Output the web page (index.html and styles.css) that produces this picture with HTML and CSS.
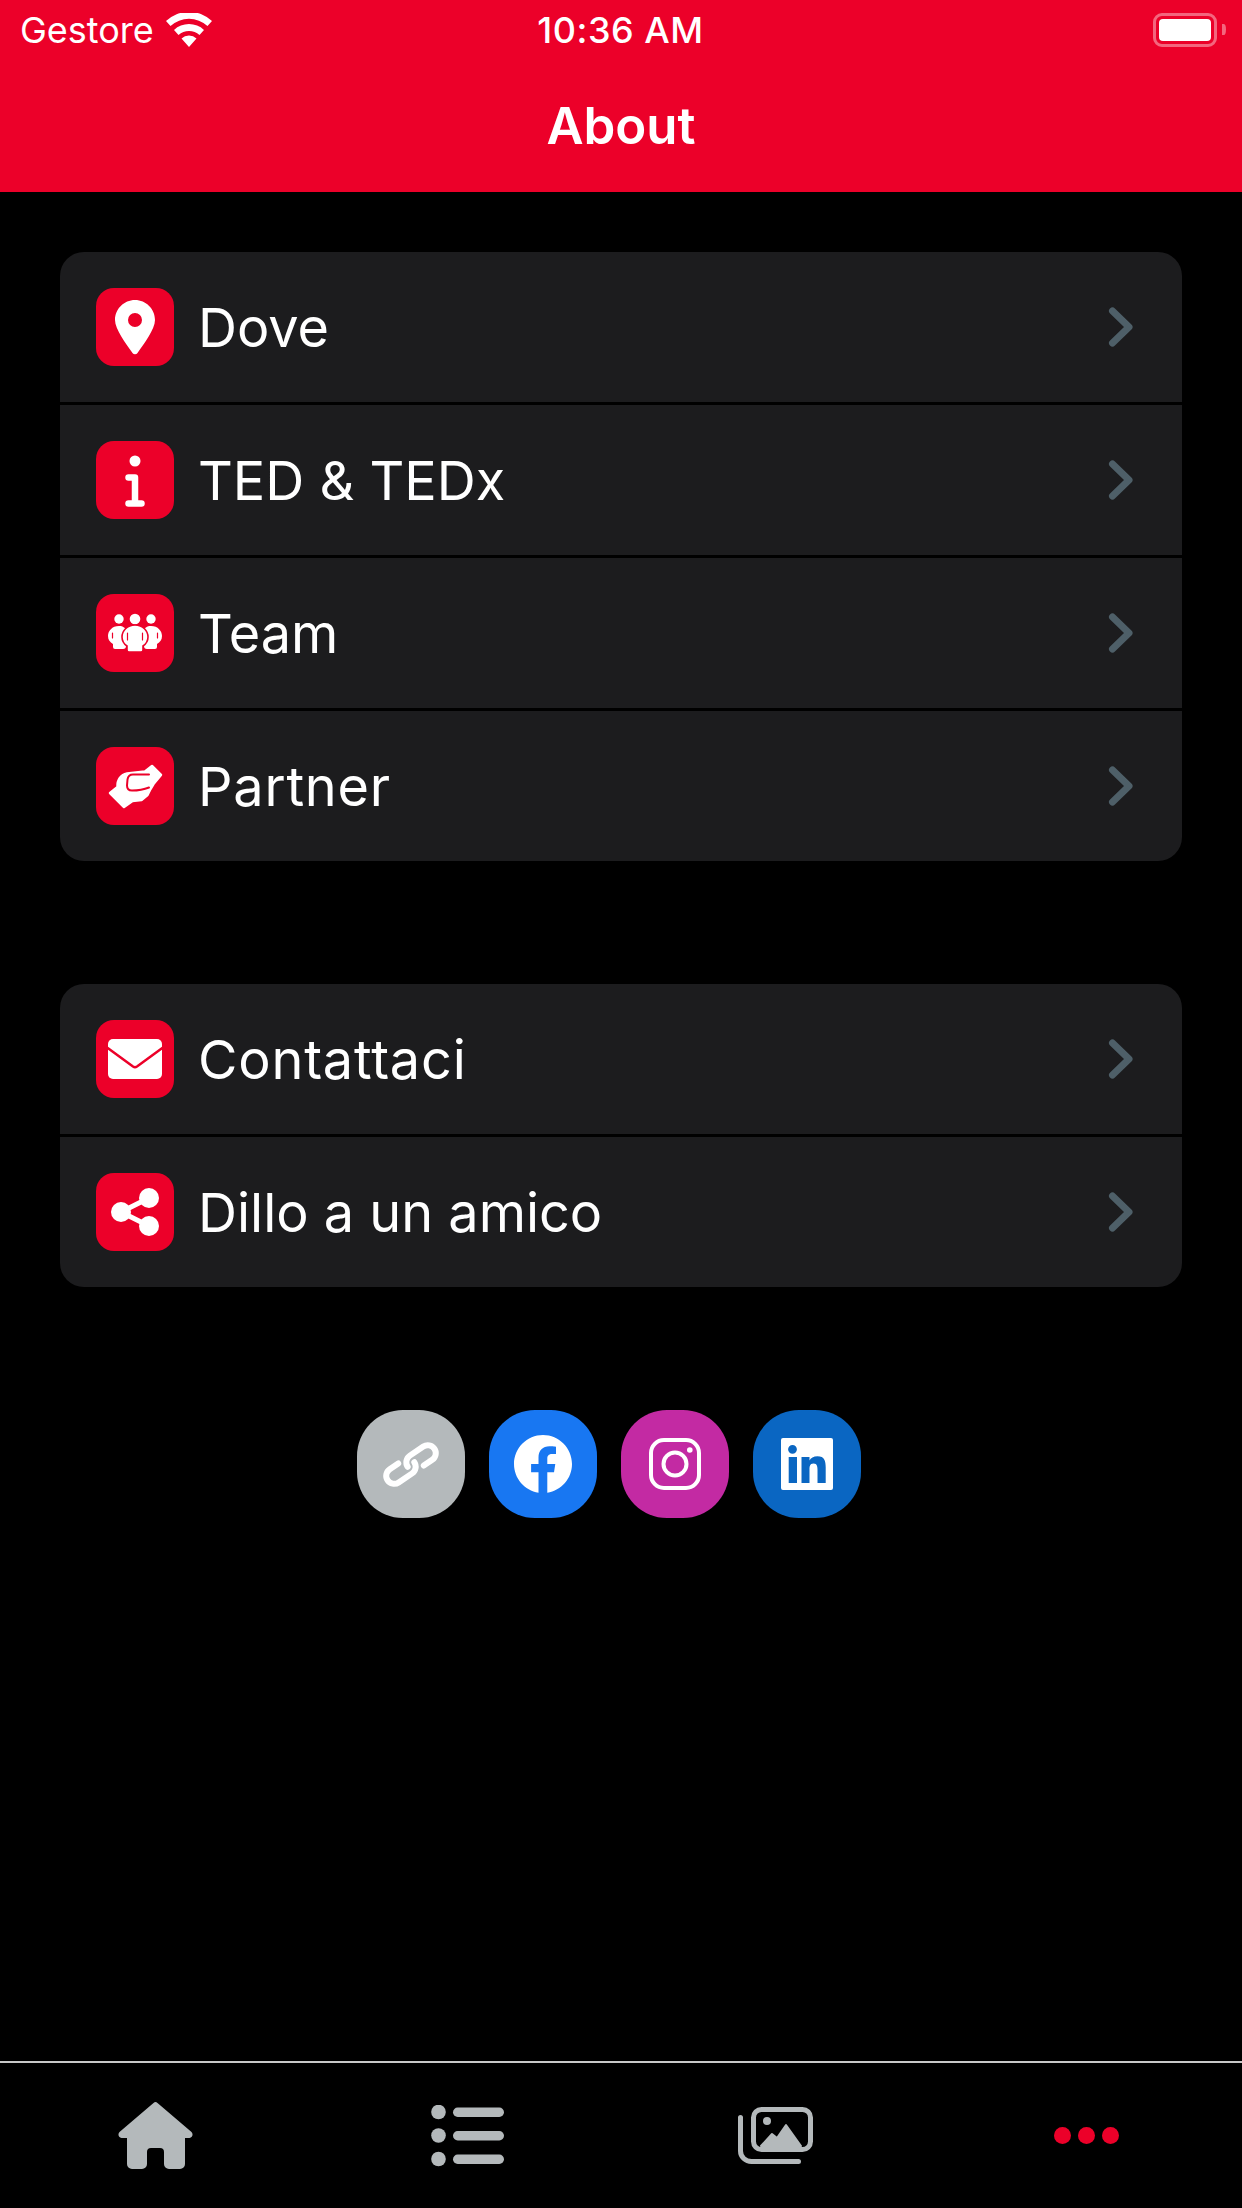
FILE: index.html
```html
<!DOCTYPE html>
<html lang="en">
<head>
    <meta charset="UTF-8">
    <meta name="viewport" content="width=device-width, initial-scale=1.0">
    <title>About</title>
    <link rel="stylesheet" href="styles.css">
</head>
<body>
    <header class="top-bar">
        <div class="status-bar">
            <div class="status-left">
                <span>Gestore</span>
                <svg class="wifi" viewBox="0 0 46 34"><path d="M23 34l-7.500-8.500a11 11 0 0 1 15 0zM12.500 22l-4.500-5a22 22 0 0 1 30 0l-4.500 5a15.500 15.500 0 0 0-21 0zM4.500 13L0 8a33.500 33.500 0 0 1 46 0l-4.500 5a27.500 27.500 0 0 0-37 0z" fill="#fff"/></svg>
            </div>
            <span class="status-time">10:36 AM</span>
            <div class="battery"><div class="battery-level"></div></div>
        </div>
        <h1>About</h1>
    </header>

    <main class="content">
        <section class="card">
            <div class="row">
                <span class="row-icon"><svg viewBox="0 0 78 78"><path fill-rule="evenodd" d="M39 12c11 0 20 9 20 20 0 9-11 24-17.500 33a3 3 0 0 1-5 0C30 56 19 41 19 32c0-11 9-20 20-20zm0 13a7 7 0 1 0 0 14 7 7 0 0 0 0-14z" fill="#fff"/></svg></span>
                <span class="row-label">Dove</span>
                <svg class="chevron" viewBox="0 0 26 42"><path d="M4.500 5L21 21 4.500 37" /></svg>
            </div>
            <div class="row">
                <span class="row-icon"><svg viewBox="0 0 78 78"><circle cx="39" cy="20" r="5.500" fill="#fff"/><path d="M32.500 36.500H39v26M32.500 62.500h13" stroke="#fff" stroke-width="6.500" stroke-linecap="round" stroke-linejoin="round" fill="none"/></svg></span>
                <span class="row-label">TED &amp; TEDx</span>
                <svg class="chevron" viewBox="0 0 26 42"><path d="M4.500 5L21 21 4.500 37" /></svg>
            </div>
            <div class="row">
                <span class="row-icon"><svg viewBox="0 0 78 78" fill="#fff"><circle cx="23" cy="25" r="4.700"/><circle cx="39" cy="25" r="5.300"/><circle cx="55" cy="25" r="4.700"/><path d="M23 32c-7 0-11 5-11 10 0 4 2 6 5 8v3a2 2 0 0 0 2 2h8c2 0 3-1 3-3V37c0-3-3-5-7-5zM55 32c7 0 11 5 11 10 0 4-2 6-5 8v3a2 2 0 0 1-2 2h-8c-2 0-3-1-3-3V37c0-3 3-5 7-5z"/><path d="M39 31c-8 0-13 6-13 12 0 4 2 7 5 9v4a2 2 0 0 0 2 2h12a2 2 0 0 0 2-2v-4c3-2 5-5 5-9 0-6-5-12-13-12z" stroke="#ec0029" stroke-width="1.600"/><path d="M31.500 39v7M46.500 39v7M16.500 39v5M61.500 39v5" stroke="#ec0029" stroke-width="1.200" stroke-linecap="round" fill="none"/></svg></span>
                <span class="row-label">Team</span>
                <svg class="chevron" viewBox="0 0 26 42"><path d="M4.500 5L21 21 4.500 37" /></svg>
            </div>
            <div class="row">
                <span class="row-icon"><svg viewBox="0 0 78 78"><path d="M14 46l7.500-6C21 33 25 27.500 31 26.500L49 24.500 56 19l9 9-7.500 9-3 5-3 6-6 5-9 1-8.500 6z" fill="#fff" stroke="#fff" stroke-width="2.500" stroke-linejoin="round"/><path d="M53 27.500H37c-3 0-5 2-5.500 5l-.5 6c0 3 2 5 5 5 6 0 12-1 17-3" fill="none" stroke="#ec0029" stroke-width="2" stroke-linecap="round"/></svg></span>
                <span class="row-label row-label-wide">Partner</span>
                <svg class="chevron" viewBox="0 0 26 42"><path d="M4.500 5L21 21 4.500 37" /></svg>
            </div>
        </section>

        <section class="card">
            <div class="row">
                <span class="row-icon"><svg viewBox="0 0 78 78"><rect x="12" y="19" width="54" height="40" rx="5" fill="#fff"/><path d="M11 27.500L37 46.500a3.500 3.500 0 0 0 4 0L67 27.500" fill="none" stroke="#ec0029" stroke-width="2.500"/></svg></span>
                <span class="row-label row-label-wide">Contattaci</span>
                <svg class="chevron" viewBox="0 0 26 42"><path d="M4.500 5L21 21 4.500 37" /></svg>
            </div>
            <div class="row">
                <span class="row-icon"><svg viewBox="0 0 78 78" fill="#fff"><circle cx="53" cy="25" r="10"/><circle cx="53" cy="53" r="10"/><circle cx="25" cy="39" r="10"/><path d="M25 39l28-14M25 39l28 14" stroke="#fff" stroke-width="5"/></svg></span>
                <span class="row-label">Dillo a un amico</span>
                <svg class="chevron" viewBox="0 0 26 42"><path d="M4.500 5L21 21 4.500 37" /></svg>
            </div>
        </section>

        <div class="social">
            <span class="social-btn social-link"><svg viewBox="0 0 108 108"><g transform="rotate(-34 54 54.500)" fill="none" stroke="#fff" stroke-width="6" stroke-linecap="round"><path d="M58 54.500a8 8 0 0 1-8 8H33.750a8 8 0 0 1 0-16H44"/><path d="M50 54.500a8 8 0 0 1 8-8H74.250a8 8 0 0 1 0 16H64"/></g></svg></span>
            <span class="social-btn social-fb"><svg viewBox="0 0 108 108"><path d="M83 54c0-16-13-29-29-29S25 38 25 54c0 14.500 10.600 26.500 24.500 28.700V62.300h-7.400V54h7.400v-6.400c0-7.300 4.300-11.300 11-11.300 3.200 0 6.500.600 6.500.600v7.100H63c-3.600 0-4.700 2.200-4.700 4.500V54h8l-1.300 8.300h-6.700v20.400C72.400 80.500 83 68.500 83 54z" fill="#fff"/></svg></span>
            <span class="social-btn social-ig"><svg viewBox="0 0 108 108"><g fill="none" stroke="#fff" stroke-width="4"><rect x="30" y="30" width="48" height="48" rx="13"/><circle cx="54" cy="54" r="11.500"/></g><circle cx="68.800" cy="40" r="2.800" fill="#fff"/></svg></span>
            <span class="social-btn social-in"><svg viewBox="0 0 108 108"><path fill-rule="evenodd" fill="#fff" d="M30 28h48a2 2 0 0 1 2 2v48a2 2 0 0 1-2 2H30a2 2 0 0 1-2-2V30a2 2 0 0 1 2-2zm9.500 15.700a4.400 4.400 0 1 0 0-8.800 4.400 4.400 0 0 0 0 8.800zM35.700 47v26H44V47zm12.800 0v26h8V60c0-3.400.1-6.500 4-6.500s4 3.500 4 6.500v13h8.200V57.200c0-6.200-1.200-11-8.200-11-4 0-6.800 1.900-8 4.300V47z"/></svg></span>
        </div>
    </main>

    <nav class="tab-bar">
        <span class="tab"><svg class="tab-home" viewBox="0 0 75 67" fill="#b4b9bb"><path d="M35.500 1a3 3 0 0 1 4 0L73.500 30c2 2 1 6-2 6H67V62a5 5 0 0 1-5 5H51a5 5 0 0 1-5-5V50a4 4 0 0 0-4-4H33a4 4 0 0 0-4 4V62a5 5 0 0 1-5 5H14a5 5 0 0 1-5-5V36H3.500c-3 0-4-4-2-6z"/></svg></span>
        <span class="tab"><svg class="tab-list" viewBox="0 0 73 62" fill="#b4b9bb"><circle cx="7.500" cy="7" r="7.300"/><circle cx="7.500" cy="30.500" r="7.300"/><circle cx="7.500" cy="54" r="7.300"/><rect x="22" y="2.500" width="51" height="9.500" rx="4.700"/><rect x="22" y="26" width="51" height="9.500" rx="4.700"/><rect x="22" y="49.500" width="51" height="9.500" rx="4.700"/></svg></span>
        <span class="tab"><svg class="tab-gallery" viewBox="0 0 76 58"><g fill="none" stroke="#b4b9bb" stroke-width="5"><rect x="15.500" y="2.500" width="57" height="40" rx="8"/><path d="M2.500 10.500V44c0 6 5 10.500 11 10.500H60.500" stroke-linecap="round"/></g><circle cx="29" cy="14" r="4" fill="#b4b9bb"/><path d="M23 39l11-12 5 4 9-13 15 21z" fill="#b4b9bb" stroke="#b4b9bb" stroke-width="2" stroke-linejoin="round"/></svg></span>
        <span class="tab"><span class="dots"><i></i><i></i><i></i></span></span>
    </nav>
</body>
</html>
```

FILE: styles.css
```css
* {
    margin: 0;
    padding: 0;
    box-sizing: border-box;
}

body {
    width: 1242px;
    height: 2208px;
    background: #000;
    color: #fff;
    font-family: 'Inter', sans-serif;
    display: flex;
    flex-direction: column;
    overflow: hidden;
}

/* Header */
.top-bar {
    height: 192px;
    background: #ec0029;
    flex-shrink: 0;
}

.status-bar {
    height: 60px;
    padding: 0 25px 0 20px;
    display: grid;
    grid-template-columns: 1fr auto 1fr;
    align-items: center;
    font-size: 36px;
}

.status-left {
    display: flex;
    align-items: center;
    gap: 12px;
}

.status-time {
    font-weight: 500;
    letter-spacing: 0.5px;
    margin-left: 4px;
}

.wifi {
    width: 46px;
    height: 34px;
}

.battery {
    justify-self: end;
    width: 64px;
    height: 34px;
    border: 3px solid rgba(255, 255, 255, 0.4);
    border-radius: 9px;
    padding: 3px;
    position: relative;
}

.battery::after {
    content: "";
    position: absolute;
    right: -12px;
    top: 8px;
    width: 4px;
    height: 11px;
    background: rgba(255, 255, 255, 0.4);
    border-radius: 0 100% 100% 0;
}

.battery-level {
    height: 100%;
    background: #fff;
    border-radius: 4px;
}

.top-bar h1 {
    font-size: 51px;
    font-weight: 600;
    text-align: center;
    line-height: 66px;
    margin-top: 33px;
}

/* Lists */
.content {
    flex: 1;
    padding: 60px 60px 0;
}

.card {
    background: #1c1c1e;
    border-radius: 24px;
    overflow: hidden;
    margin-bottom: 123px;
}

.row {
    height: 150px;
    padding: 0 48px 0 36px;
    display: flex;
    align-items: center;
    border-bottom: 3px solid #000;
    box-sizing: content-box;
}

.row:last-child {
    border-bottom: none;
}

.row-icon {
    width: 78px;
    height: 78px;
    background: #ec0029;
    border-radius: 18px;
    flex-shrink: 0;
}

.row-icon svg {
    display: block;
    width: 78px;
    height: 78px;
}

.row-label {
    flex: 1;
    margin-left: 24px;
    font-size: 54px;
}

.row-label-wide {
    letter-spacing: 0.8px;
}

.chevron {
    width: 26px;
    height: 42px;
    fill: none;
    stroke: #4e5f68;
    stroke-width: 7;
    stroke-linecap: round;
    stroke-linejoin: round;
}

/* Social buttons */
.social {
    display: flex;
    justify-content: center;
}

.social-btn {
    width: 108px;
    height: 108px;
    border-radius: 46px;
    margin-right: 24px;
}

.social-btn svg {
    display: block;
    width: 108px;
    height: 108px;
}

.social-link {
    background: #b4b9bb;
}

.social-fb {
    background: #1877f2;
}

.social-ig {
    background: #c32aa3;
}

.social-in {
    background: #0a66c2;
}

/* Tab bar */
.tab-bar {
    height: 147px;
    border-top: 2px solid #c8c8c8;
    display: flex;
    flex-shrink: 0;
}

.tab {
    flex: 1;
    display: flex;
    justify-content: center;
    align-items: center;
}

.tab-home {
    width: 75px;
    height: 67px;
}

.tab-list {
    width: 73px;
    height: 62px;
    margin-left: 3px;
}

.tab-gallery {
    width: 76px;
    height: 58px;
}

.dots {
    display: flex;
    gap: 7px;
}

.dots i {
    width: 17px;
    height: 17px;
    border-radius: 50%;
    background: #ec0029;
}
```
